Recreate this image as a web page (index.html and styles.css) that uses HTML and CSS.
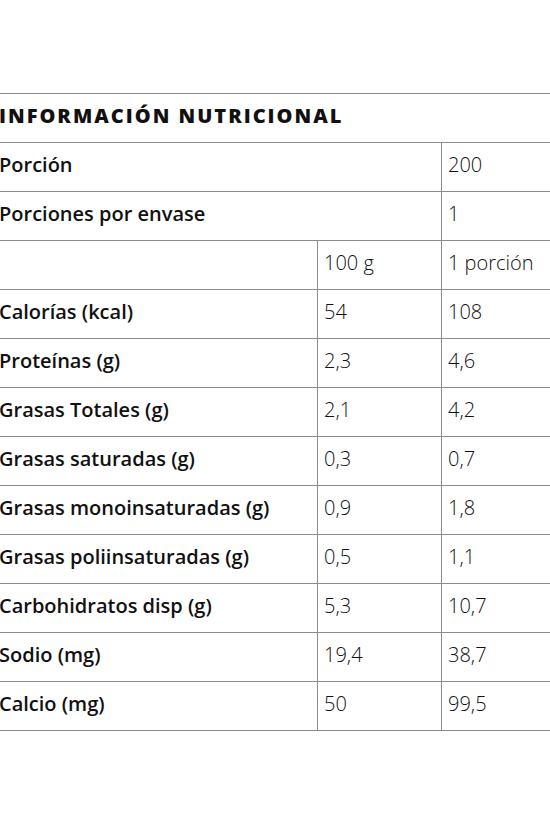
FILE: index.html
```html
<!DOCTYPE html>
<html lang="es">
<head>
<meta charset="utf-8">
<link rel="stylesheet" href="styles.css">
</head>
<body>
<div class="page">
<table class="nutri">
  <colgroup><col class="c1"><col class="c2"><col class="c3"></colgroup>
  <tr><th colspan="3" class="title">INFORMACIÓN NUTRICIONAL</th></tr>
  <tr><td colspan="2" class="lbl">Porción</td><td class="val">200</td></tr>
  <tr><td colspan="2" class="lbl">Porciones por envase</td><td class="val">1</td></tr>
  <tr><td class="lbl"></td><td class="val">100 g</td><td class="val">1 porción</td></tr>
  <tr><td class="lbl">Calorías (kcal)</td><td class="val">54</td><td class="val">108</td></tr>
  <tr><td class="lbl">Proteínas (g)</td><td class="val">2,3</td><td class="val">4,6</td></tr>
  <tr><td class="lbl">Grasas Totales (g)</td><td class="val">2,1</td><td class="val">4,2</td></tr>
  <tr><td class="lbl">Grasas saturadas (g)</td><td class="val">0,3</td><td class="val">0,7</td></tr>
  <tr><td class="lbl">Grasas monoinsaturadas (g)</td><td class="val">0,9</td><td class="val">1,8</td></tr>
  <tr><td class="lbl">Grasas poliinsaturadas (g)</td><td class="val">0,5</td><td class="val">1,1</td></tr>
  <tr><td class="lbl">Carbohidratos disp (g)</td><td class="val">5,3</td><td class="val">10,7</td></tr>
  <tr><td class="lbl">Sodio (mg)</td><td class="val">19,4</td><td class="val">38,7</td></tr>
  <tr><td class="lbl">Calcio (mg)</td><td class="val">50</td><td class="val">99,5</td></tr>
</table>
</div>
</body>
</html>
```

FILE: styles.css
```css
html, body {
  margin: 0;
  padding: 0;
  background: #fff;
}
.page {
  padding-top: 93px;
  overflow: hidden;
  width: 550px;
}
.nutri {
  margin-left: -8px;
  width: 580px;
  border-collapse: collapse;
  table-layout: fixed;
  font-family: "Open Sans", "Noto Sans", sans-serif;
  color: #111;
}
.c1 { width: 325px; }
.c2 { width: 124px; }
.c3 { width: 131px; }
.nutri th, .nutri td {
  border: 1px solid #8c8c8c;
  height: 49px;
  box-sizing: border-box;
  padding: 0 0 4px 6px;
  line-height: 24px;
  text-align: left;
  vertical-align: middle;
}
.title {
  font-weight: 800;
  font-size: 20px;
  letter-spacing: 2px;
  border-left: none;
  border-right: none;
}
.lbl {
  font-weight: 600;
  font-size: 20px;
}
.val {
  font-weight: 300;
  font-size: 20px;
  color: #111;
}
```
